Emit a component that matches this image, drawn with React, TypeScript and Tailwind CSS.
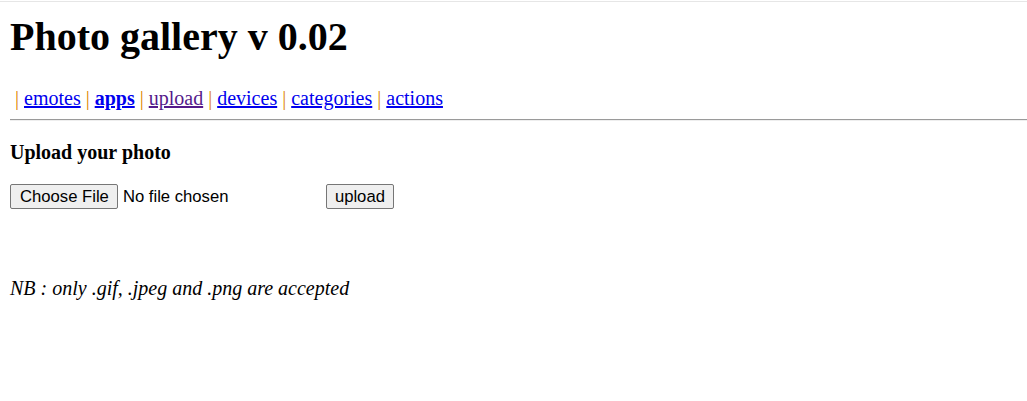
export default function App() {
  const links: { t: string; c: string }[] = [
    { t: "emotes", c: "text-[#0000ee] decoration-[#0000ee]" },
    { t: "apps", c: "text-[#0000ee] decoration-[#0000ee] font-bold" },
    { t: "upload", c: "text-[#551a8b] decoration-[#551a8b]" },
    { t: "devices", c: "text-[#0000ee] decoration-[#0000ee]" },
    { t: "categories", c: "text-[#0000ee] decoration-[#0000ee]" },
    { t: "actions", c: "text-[#0000ee] decoration-[#0000ee]" },
  ];
  return (
    <div className="w-[1027px] h-[401px] bg-white text-black font-['Liberation_Serif',serif] overflow-hidden">
      <div className="h-px mt-px bg-[#e6e6e6]" />
      <div className="pl-[10px]">
        <h1 className="text-[40px] leading-[46px] font-bold mt-[12px] mb-0">Photo gallery v 0.02</h1>
        <div className="mt-[27px] text-[20px] leading-[23px] whitespace-pre">
          <span className="text-[#dc8200]">{" | "}</span>
          {links.map((l, i) => (
            <span key={l.t}>
              <a href="#" className={"underline " + l.c}>{l.t}</a>
              {i < links.length - 1 && <span className="text-[#dc8200]">{" | "}</span>}
            </span>
          ))}
        </div>
        <div className="mt-[9px] border-t border-t-[#9a9a9a] border-b border-b-[#eeeeee]" />
        <div className="mt-[20px] text-[20px] leading-[23px] font-bold">Upload your photo</div>
        <div className="mt-[20px] flex items-center h-[25px] font-['Liberation_Sans',sans-serif] text-[16.67px]">
          <button className="h-[25px] pl-[9px] pr-[8px] bg-[#efefef] border border-[#767676] rounded-[2px] leading-[20px]">Choose File</button>
          <span className="ml-[5px] w-[203px]">No file chosen</span>
          <button className="h-[25px] px-[8px] bg-[#efefef] border border-[#767676] rounded-[2px] leading-[20px]">upload</button>
        </div>
        <div className="mt-[68px] text-[20px] leading-[23px] italic">NB : only .gif, .jpeg and .png are accepted</div>
      </div>
    </div>
  );
}
